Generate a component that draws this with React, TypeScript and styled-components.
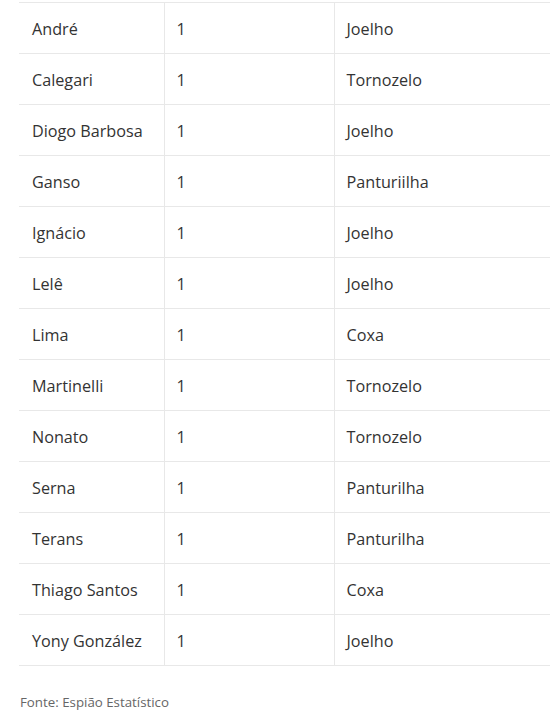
import React from "react";
import styled, { createGlobalStyle } from "styled-components";

const GlobalStyle = createGlobalStyle`
  html, body {
    margin: 0;
    padding: 0;
    background: #ffffff;
  }
  body {
    font-family: "Open Sans", "Noto Sans", sans-serif;
    overflow: hidden;
  }
`;

const Page = styled.div`
  padding: 2px 0 0 19px;
  width: 550px;
  box-sizing: border-box;
`;

const Table = styled.table`
  width: 100%;
  border-collapse: collapse;
  table-layout: fixed;
`;

const Row = styled.tr`
  height: 51px;
`;

const Cell = styled.td<{ $w: number; $first?: boolean }>`
  width: ${(p) => p.$w}px;
  padding: 2px 0 0 ${(p) => (p.$first ? 13 : 12)}px;
  box-sizing: border-box;
  border-top: 1px solid #e8e8e8;
  border-bottom: 1px solid #e8e8e8;
  border-left: ${(p) => (p.$first ? "none" : "1px solid #e8e8e8")};
  font-size: 16.2px;
  line-height: 22px;
  color: #333333;
  vertical-align: middle;
  white-space: nowrap;
`;

const Source = styled.p`
  margin: 26px 0 0 1px;
  font-size: 13.3px;
  line-height: 20px;
  color: #666666;
`;

const rows: [string, string, string][] = [
  ["André", "1", "Joelho"],
  ["Calegari", "1", "Tornozelo"],
  ["Diogo Barbosa", "1", "Joelho"],
  ["Ganso", "1", "Panturiilha"],
  ["Ignácio", "1", "Joelho"],
  ["Lelê", "1", "Joelho"],
  ["Lima", "1", "Coxa"],
  ["Martinelli", "1", "Tornozelo"],
  ["Nonato", "1", "Tornozelo"],
  ["Serna", "1", "Panturilha"],
  ["Terans", "1", "Panturilha"],
  ["Thiago Santos", "1", "Coxa"],
  ["Yony González", "1", "Joelho"],
];

export default function App() {
  return (
    <>
      <GlobalStyle />
      <Page>
        <Table>
          <tbody>
            {rows.map(([name, n, part]) => (
              <Row key={name}>
                <Cell $w={145} $first>
                  {name}
                </Cell>
                <Cell $w={170}>{n}</Cell>
                <Cell $w={216}>{part}</Cell>
              </Row>
            ))}
          </tbody>
        </Table>
        <Source>Fonte: Espião Estatístico</Source>
      </Page>
    </>
  );
}
